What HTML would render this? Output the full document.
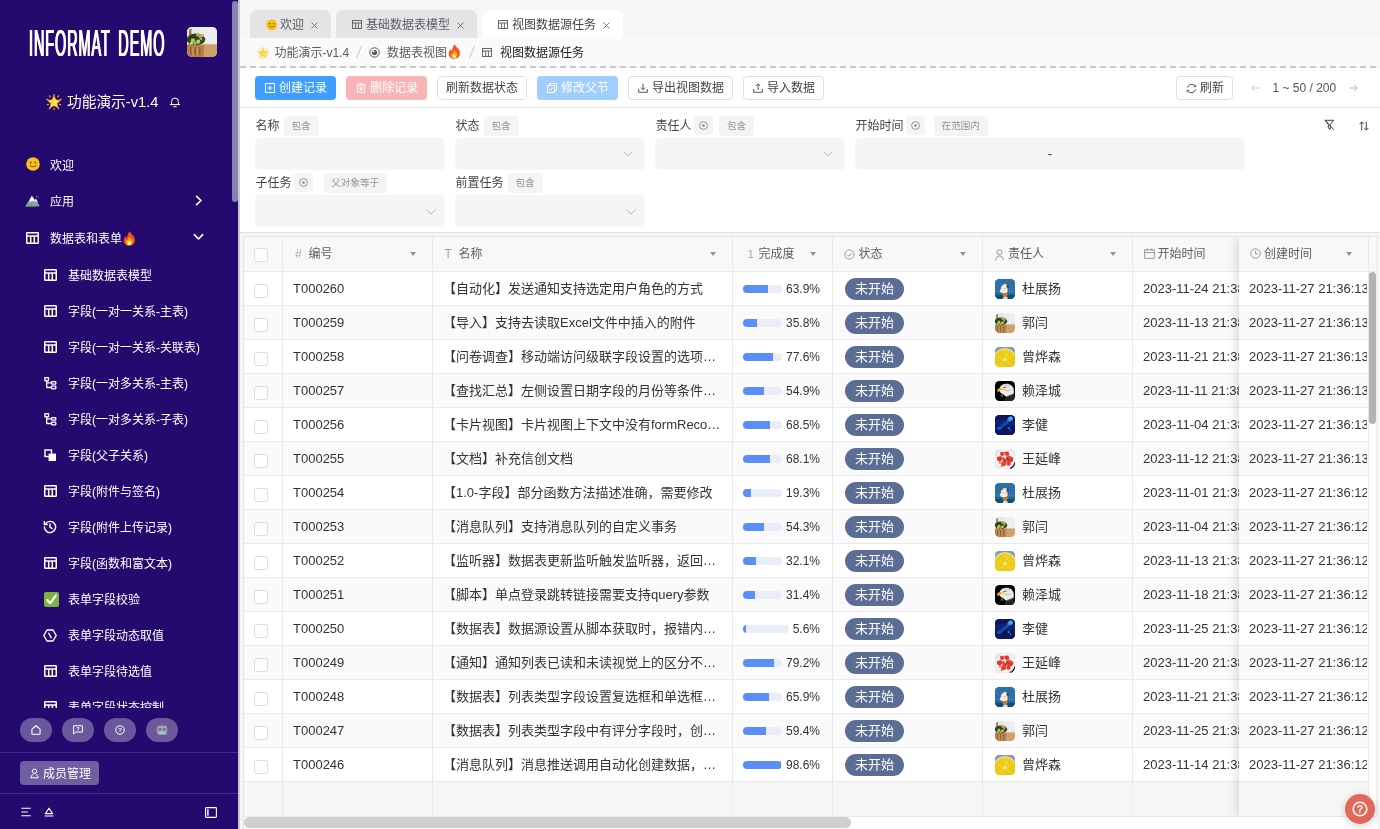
<!DOCTYPE html>
<html lang="zh-CN">
<head>
<meta charset="utf-8">
<title>视图数据源任务 - INFORMAT DEMO</title>
<style>
*{box-sizing:border-box;margin:0;padding:0}
html,body{width:1380px;height:829px;overflow:hidden;background:#fff}
body{font-family:"Liberation Sans","Noto Sans CJK SC",sans-serif;font-size:12px;color:#333;position:relative}
svg{display:block}
.abs{position:absolute}
#side{position:absolute;left:0;top:0;width:238px;height:829px;background:#240a6e;color:#fff;overflow:hidden}
#sidethumb{position:absolute;left:232px;top:.500px;width:6px;height:201.500px;background:#8982b1;border-radius:3px}
#resizer{position:absolute;left:238px;top:0;width:2px;height:829px;background:#c9c9c9}
#main{position:absolute;left:240px;top:0;width:1140px;height:829px;background:#f5f5f6;overflow:hidden}
.logo{position:absolute;left:28.500px;top:23.500px;font-size:36px;line-height:40px;color:#fff;white-space:nowrap;transform-origin:0 0;transform:scale(.40,1);text-shadow:1.300px 0 #fff,-1.300px 0 #fff;letter-spacing:2.400px;word-spacing:7px;font-family:"Liberation Sans",sans-serif}
.avatar0{position:absolute;left:187px;top:27px;width:30px;height:30px;border-radius:5px;overflow:hidden}
.apptitle{position:absolute;left:67px;top:92px;font-size:14.7px;line-height:20px;color:#fff;white-space:nowrap}
.mi{position:absolute;left:0;width:232px;height:36px;line-height:36px;font-size:12px;color:#fff;white-space:nowrap}
.mi .ic{position:absolute;top:10px;width:16px;height:16px}
.mi .tx{position:absolute;top:1px}
.pill{position:absolute;top:716px;width:32px;height:26px;border-radius:13px;background:rgba(255,255,255,.32)}
.sdiv{position:absolute;left:0;width:232px;height:1px;background:rgba(255,255,255,.14)}
/* main */
#tabs{position:absolute;left:0;top:0;width:1140px;height:38px;background:#f5f6f8}
.tab{position:absolute;top:10px;height:28px;border-radius:7px 7px 0 0;background:#e3e4e6;font-size:12px;line-height:28px;color:#5c5e62;white-space:nowrap}
.tab.on{background:#fff;color:#444}
.tab .t{position:absolute;top:1px}
#crumb{position:absolute;left:0;top:38px;width:1140px;height:28px;background:#fafafb;font-size:12px;line-height:28px;color:#5a5c60;white-space:nowrap}
#crumb span{position:absolute;top:1px}
#dash{position:absolute;left:0;top:66px;width:1140px;height:2px;background:repeating-linear-gradient(90deg,#c9c9c9 0,#c9c9c9 6px,transparent 6px,transparent 10px)}
#tool{position:absolute;left:0;top:68px;width:1140px;height:40px;background:#fff;border-bottom:1px solid #e3e3e3}
.btn{position:absolute;top:8px;height:24px;border-radius:4px;font-size:12px;line-height:24px;color:#fff;white-space:nowrap}
.btn.plain{background:#fff;border:1px solid #dcdfe6;color:#444;line-height:22px}
.btn span{position:absolute;top:0}
#filt{position:absolute;left:0;top:108px;width:1140px;height:125px;background:#fff;border-bottom:1px solid #e2e2e2}
.fl{position:absolute;font-size:12px;line-height:20px;color:#444;white-space:nowrap}
.ftag{position:absolute;height:20px;border-radius:4px;background:#f4f4f5;color:#909399;font-size:9.6px;line-height:20px;text-align:center;white-space:nowrap}
.fin{position:absolute;height:32px;border-radius:5px;background:#f5f5f5}
#gap{position:absolute;left:0;top:233px;width:1140px;height:4px;background:#f5f5f6}
/* table */
#tbl{position:absolute;left:3px;top:236px;width:1134px;height:593px;background:#fff;border-left:1px solid #e4e5e8;border-top:1px solid #e4e5e8;overflow:hidden}
.row{position:absolute;left:0;width:1136px;height:34px;border-bottom:1px solid #e8e9eb;background:#fff;font-size:13px;line-height:33px;color:#333;white-space:nowrap}
.row.alt{background:#fafafa}
.row.hd{height:35px;background:#f8f8f9;font-size:12px;color:#5c5e62;line-height:34px}
.c{position:absolute;top:0;height:100%;border-right:1px solid #e8e9eb;overflow:hidden}
.c .tx{position:absolute;left:10px;top:0;right:10px;overflow:hidden;text-overflow:ellipsis}
.cb{position:absolute;left:10px;width:14px;height:14px;border:1px solid #d9dce3;border-radius:2.500px;background:#fff}
.bar{position:absolute;left:10px;top:13px;width:39px;height:8px;border-radius:4px;background:#e9edf7;overflow:hidden}
.bar i{position:absolute;left:0;top:0;height:8px;background:#5b8ff7}
.pct{position:absolute;right:12px;top:1px;font-size:12px}
.st{position:absolute;left:12px;top:6px;width:59px;height:22px;border-radius:11px;background:#5b6d95;color:#fff;font-size:13px;line-height:21px;text-align:center}
.av{position:absolute;left:12px;top:7px;width:20px;height:20px;border-radius:4.500px;overflow:hidden}
.nm{position:absolute;left:39px;top:0}
.caret{position:absolute;top:15px;width:0;height:0;border-left:3.500px solid transparent;border-right:3.500px solid transparent;border-top:4px solid #909399}
#fix{position:absolute;left:995px;top:0;width:130px;height:579px;box-shadow:-3px 0 10px rgba(0,0,0,.12)}

#side,#main{will-change:transform}

</style>
</head>
<body>
<svg width="0" height="0" style="position:absolute"><defs><filter id="blr" x="-10%" y="-10%" width="120%" height="120%"><feGaussianBlur stdDeviation=".45"/></filter><symbol id="av0" viewBox="0 0 20 20"><rect width="20" height="20" fill="#2d6ea8"/><g filter="url(#blr)"><rect x="-2" y="-2" width="24" height="15" fill="#2e6fa9"/><rect x="-2" y="12.300" width="24" height="1.500" fill="#3f84b2"/><rect x="-2" y="13.600" width="24" height="3" fill="#1a6892"/><rect x="-2" y="16" width="24" height="6" fill="#104e76"/><path d="M7.300 14h5.500l-.7 3.800H8.200z" fill="#c8742f"/><ellipse cx="8.800" cy="11.800" rx="3.900" ry="2.500" fill="#f3e9dc"/><ellipse cx="9.300" cy="9" rx="3.300" ry="2.400" fill="#f7efe6"/><ellipse cx="10" cy="6.600" rx="2.400" ry="1.700" fill="#f4e6d6"/><path d="M7.500 9.500q2 1.300 4.500-.5" stroke="#d9b48a" stroke-width=".8" fill="none"/><path d="M11.800 5.600l1.800.3-.3 3.200-1.700-.4z" fill="#5b3420"/><ellipse cx="10.300" cy="19.600" rx="2.400" ry="2" fill="#e9dada"/></g></symbol><symbol id="av1" viewBox="0 0 20 20"><rect width="20" height="20" fill="#e7eae7"/><g filter="url(#blr)"><rect x="-2" y="-2" width="24" height="14" fill="#e6e9e6"/><rect x="9" y="-2" width="13" height="14" fill="#eceeed"/><rect x="-2" y="11.700" width="24" height="11" fill="#c9935d"/><rect x="11" y="11.700" width="11" height="11" fill="#d19f6b"/><path d="M1.300 12V2.500q.3-1.600 1.700-1.500V12z" fill="#a8743d"/><ellipse cx="6" cy="8.300" rx="6.200" ry="3.900" fill="#2c431c"/><circle cx="4" cy="9" r="1.500" fill="#a8c868"/><circle cx="7.500" cy="9.800" r="1.400" fill="#b3d072"/><circle cx="3" cy="10.800" r="1.100" fill="#b9d47c"/><circle cx="5.500" cy="10.900" r="1" fill="#a2c463"/><circle cx="8.600" cy="6" r="1.300" fill="#8fb255"/><circle cx="10.300" cy="5.600" r="1.100" fill="#a9c66e"/><circle cx="7" cy="5.300" r="1.100" fill="#d59a56"/><circle cx="9.300" cy="7.800" r="1" fill="#cf9560"/><circle cx="10.500" cy="9.200" r=".9" fill="#5b4a22"/><path d="M-.5 11.800h12l-.7 9h-11z" fill="#b8804a"/><path d="M2.500 13.500v5M5.500 13.500v5M8.500 13.500v5" stroke="#8c5f38" stroke-width="1"/><path d="M4 14v5M7 14v5" stroke="#cf9d68" stroke-width=".7"/></g></symbol><symbol id="av2" viewBox="0 0 20 20"><rect width="20" height="20" fill="#e9c915"/><g filter="url(#blr)"><rect x="-2" y="-2" width="24" height="9" fill="#7f93e0"/><circle cx="10" cy="13" r="11.800" fill="#f6efb0"/><circle cx="10" cy="13.300" r="11.200" fill="#f0d52a"/><circle cx="10" cy="13.500" r="10.300" fill="#ecca16"/><g stroke="#f3dc4a" stroke-width=".8"><path d="M10 4v8M3 9l6 4M17 9l-6 4M4 18l5-4M16 18l-5-4"/></g><circle cx="10" cy="12.700" r="1.500" fill="#f7edb2"/><path d="M12 8.500l.8-2" stroke="#f9f0b8" stroke-width=".8"/></g></symbol><symbol id="av3" viewBox="0 0 20 20"><rect width="20" height="20" fill="#030303"/><g filter="url(#blr)"><path d="M4.800 6.500C6.500 2.500 13 1.500 16.500 4.500c2.600 2.300 3 6.300 1.700 9l-4.500 2.200c-1.800.4-3.300-.2-4.300-1.400-.9-1.100-2.200-1.300-3.400-2.300-1.300-1.100-1.900-3.300-1.200-5.500z" fill="#efe9e1"/><path d="M9 4.500q3-1.500 6 .5M8 8q4 3 8 1" stroke="#cdbfae" stroke-width="1" fill="none"/><path d="M11 16l8-3.500V21H9z" fill="#262626"/><path d="M12 15.500l6-2" stroke="#555" stroke-width=".8"/><path d="M2 9.500c.3-1.700 2-2.800 4.500-2.600l1.600 1.600c-1.800.5-3.300.8-4.200 2.600-.9-.3-1.600-.8-1.900-1.600z" fill="#f0b41c"/><path d="M8 6.800l3.500-.5" stroke="#6b5b48" stroke-width=".9"/><path d="M5.500 15.500l1.500-2 .8 2.300" stroke="#5f7da6" stroke-width="1" fill="none"/></g></symbol><symbol id="av4" viewBox="0 0 20 20"><rect width="20" height="20" fill="#07195c"/><g filter="url(#blr)"><rect x="-2" y="-2" width="24" height="24" fill="#07195c"/><rect x="-2" y="5" width="24" height="6" fill="#0a2473"/><path d="M15.500 5.500L4 15.500l-2-2.500L13 4z" fill="#12409f"/><path d="M13.500 6.500L5 14" stroke="#1e58c8" stroke-width="1.500"/><g stroke="#06184f" stroke-width=".6"><path d="M7 8l5 5M9 6.500l4.500 4.500M5.500 10l4 4"/></g><ellipse cx="15.300" cy="3.800" rx="2.900" ry="2.300" fill="#2f92f5" transform="rotate(-35 15.300 3.800)"/><circle cx="15.800" cy="3.300" r="1.200" fill="#55b2ff"/><circle cx="13.800" cy="13" r="1.200" fill="#1f6be0"/><circle cx="15.500" cy="15.300" r=".8" fill="#2a7cf0"/><ellipse cx="4" cy="13.500" rx="2.500" ry="1.300" fill="#1a50c0"/></g></symbol><symbol id="av5" viewBox="0 0 20 20"><rect width="20" height="20" fill="#eeeef1"/><g filter="url(#blr)"><rect x="-2" y="-2" width="24" height="24" fill="#eaeaee"/><circle cx="10" cy="10" r="9.500" fill="#f6f6f8"/><path d="M15 19.500q4-1.500 5-6" stroke="#222" stroke-width="1.300" fill="none"/><path d="M1 7q.5-3 3-5.500" stroke="#c5cad6" stroke-width=".8" fill="none"/><circle cx="5" cy="13.500" r="1.600" fill="#cf9f78"/><circle cx="13.500" cy="16" r="1.300" fill="#d4a57e"/><circle cx="9" cy="16.300" r="1" fill="#d8ab88"/><g fill="#e3382c"><path d="M5.500 2.800l3 .2 1 3-2.800 1.300-2-2z"/><path d="M9 2.700l4.500-.2.800 3.500-3.800 1.200z"/><path d="M2 8l4-1 2 3-3 2.800-3-1.500z"/><path d="M7.500 8l3 .500.800 4-3.500 1z"/><path d="M11 7.500l4-.5 3.500 2-1 4-4 .5-2.500-2z"/><path d="M7 12.500l4-.3.500 3.500-3 1.500-2.500-2z"/><path d="M11.500 13l3.500-.5 1 3-3.500 1.200z"/><circle cx="13.300" cy="5.800" r="1"/><circle cx="6.800" cy="17" r=".9"/></g><path d="M9.300 6.300l1.800.2-.2 3.500-1.400-.3z" fill="#f5e9e6"/><path d="M12.300 9.300l1.200 1.700M10 12l1.500.8" stroke="#7a2d22" stroke-width=".9"/><path d="M5 4.500l1.500 1M14 8.500l1.500 1M8.500 13.500l1.500.6" stroke="#f28a7c" stroke-width=".7"/></g></symbol></defs></svg>
<div id="side">
<div class="logo">INFORMAT DEMO</div>
<div class="avatar0"><svg width="30" height="30" viewBox="0 0 20 20"><use href="#av1"/></svg></div>
<svg class="abs" style="left:46px;top:94px" width="16" height="16" viewBox="0 0 16 16"><g stroke="#fbc02d" stroke-width="1.100" stroke-linecap="round"><path d="M8 .5v1.500M.600 5.300l1.500.5M15.400 5.300l-1.500.5M3.300 14.800l.8-1.200M12.700 14.800l-.8-1.200M1.300 10.800l1.200-.5M14.700 10.800l-1.200-.5M3.400 1.900l.8 1.100M12.600 1.900l-.8 1.100M8 15.600v-1"/></g><path d="M8 1.700l2 4.100 4.600.6-3.400 3.100.9 4.500L8 11.800l-4.100 2.200.9-4.500L1.400 6.400 6 5.800z" fill="#fdd835" stroke="#f9a825" stroke-width=".4" stroke-linejoin="round"/><path d="M8 3.600l1.300 2.900 3 .4-2.200 2 .6 3L8 10.400z" fill="#ffee58" opacity=".7"/></svg>
<div class="apptitle">功能演示-v1.4</div>
<svg class="abs" style="left:169px;top:96px" width="12" height="12" viewBox="0 0 12 12" fill="none" stroke="#fff" stroke-width="1" stroke-linecap="round" stroke-linejoin="round"><path d="M2.600 8.500V5.400a3.400 3.400 0 0 1 6.800 0v3.100M1.300 8.600h9.400M4.700 10.700h2.600"/></svg>
<div id="menu" style="position:absolute;left:0;top:0;width:232px;height:708px;overflow:hidden">
<div class="mi" style="top:146px"><svg class="abs" style="left:26px;top:11px" width="14" height="14" viewBox="0 0 14 14"><circle cx="7" cy="7" r="6.8" fill="#fcc21b"/><ellipse cx="4.7" cy="5.6" rx=".8" ry="1.1" fill="#5d4037"/><ellipse cx="9.3" cy="5.6" rx=".8" ry="1.1" fill="#5d4037"/><path d="M4 8.9q3 2.3 6 0" fill="none" stroke="#5d4037" stroke-width=".9" stroke-linecap="round"/></svg><span class="tx" style="left:50px;top:2px">欢迎</span></div>
<div class="mi" style="top:182px"><svg class="abs" style="left:25px;top:13px" width="15" height="12" viewBox="0 0 15 12"><path d="M.3 11.300L6.800.8l3 4.300 1.200-1.300 3.700 7.500z" fill="#8d9db0"/><path d="M6.800.8l3 4.300-1.300 1.700-1.500-1.300-1.500 1.800-1.200-1.100z" fill="#fff"/><path d="M11 3.800l1.600 3.200-1.200-.5-.9.900-.9-1.700z" fill="#e8eef5"/><path d="M0 11.700q3.500-2.300 7.500-1.100t7.500 1.100z" fill="#6a9a3b"/><circle cx="11.600" cy="1.400" r=".5" fill="#fff"/><circle cx="13.200" cy="2.600" r=".4" fill="#fff"/></svg><span class="tx" style="left:50px;top:2px">应用</span><svg class="abs" style="left:195px;top:13px" width="8" height="11" viewBox="0 0 8 11" fill="none" stroke="#fff" stroke-width="1.6" stroke-linecap="round" stroke-linejoin="round"><path d="M1.600 1.300l4.400 4.200-4.400 4.200"/></svg></div>
<div class="mi" style="top:220px"><svg class="abs" style="left:26px;top:12px" width="13" height="12" viewBox="0 0 13 12" fill="none" stroke="#fff" stroke-width="1.5"><rect x=".75" y=".75" width="11.5" height="10.5" rx=".6"/><path d="M.75 3.9h11.5M4.7 3.9v7.3M8.3 3.9v7.3"/></svg><span class="tx" style="left:50px">数据表和表单</span><svg class="abs" style="left:123px;top:11px" width="13" height="15" viewBox="0 0 13 15"><path d="M6.800.3c.7 2.400 3.100 3.400 4.300 5.800 1.500 2.900.9 6.400-1.900 8-1.900 1.100-4.400 1-6.200-.2C.6 12.300.200 9.200 1.400 7c.4-.8.900-1.500 1.500-2.100.1 1 .5 1.700 1.100 2.100C4 4.600 5.200 2.100 6.800.3z" fill="#f4511e"/><path d="M6.600 5.800c.5 1.500 2 2.300 2.600 3.900.6 1.700 0 3.500-1.500 4.200-1.100.5-2.500.4-3.500-.4-1.200-1-1.400-2.700-.7-4 .2-.4.500-.8.900-1.100 0 .6.300 1 .7 1.300 0-1.500.6-2.900 1.500-3.900z" fill="#ffb300"/><path d="M6.500 9.600c.3.900 1.100 1.400 1.400 2.300.3.900-.1 1.800-.9 2.100-.6.200-1.300.1-1.800-.3-.6-.5-.7-1.400-.3-2.100.4-.7 1.200-1.100 1.600-2z" fill="#fff59d"/></svg><svg class="abs" style="left:193px;top:13px" width="11" height="8" viewBox="0 0 11 8" fill="none" stroke="#fff" stroke-width="1.600" stroke-linecap="round" stroke-linejoin="round"><path d="M1.300 1.600l4.200 4.400 4.200-4.400"/></svg></div>
<div class="mi" style="top:257px"><svg class="abs" style="left:44px;top:12px" width="13" height="12" viewBox="0 0 13 12" fill="none" stroke="#fff" stroke-width="1.5"><rect x=".75" y=".75" width="11.5" height="10.5" rx=".6"/><path d="M.75 3.9h11.5M4.7 3.9v7.3M8.3 3.9v7.3"/></svg><span class="tx" style="left:68px">基础数据表模型</span></div>
<div class="mi" style="top:293px"><svg class="abs" style="left:44px;top:12px" width="13" height="12" viewBox="0 0 13 12" fill="none" stroke="#fff" stroke-width="1.5"><rect x=".75" y=".75" width="11.5" height="10.5" rx=".6"/><path d="M.75 3.9h11.5M4.7 3.9v7.3M8.3 3.9v7.3"/></svg><span class="tx" style="left:68px">字段(一对一关系-主表)</span></div>
<div class="mi" style="top:329px"><svg class="abs" style="left:44px;top:12px" width="13" height="12" viewBox="0 0 13 12" fill="none" stroke="#fff" stroke-width="1.5"><rect x=".75" y=".75" width="11.5" height="10.5" rx=".6"/><path d="M.75 3.9h11.5M4.7 3.9v7.3M8.3 3.9v7.3"/></svg><span class="tx" style="left:68px">字段(一对一关系-关联表)</span></div>
<div class="mi" style="top:365px"><svg class="abs" style="left:44px;top:12px" width="13" height="13" viewBox="0 0 13 13" fill="none" stroke="#fff" stroke-width="1.3"><rect x=".9" y=".7" width="3.6" height="3"/><rect x="7.6" y="4.6" width="4.2" height="2.6" rx=".5"/><rect x="7.6" y="9.2" width="4.2" height="2.6" rx=".5"/><path d="M2.7 3.7v6.2q0 .6.6.6h4.3M2.7 5.9h4.9"/></svg><span class="tx" style="left:68px">字段(一对多关系-主表)</span></div>
<div class="mi" style="top:401px"><svg class="abs" style="left:44px;top:12px" width="13" height="13" viewBox="0 0 13 13" fill="none" stroke="#fff" stroke-width="1.3"><rect x=".9" y=".7" width="3.6" height="3"/><rect x="7.6" y="4.6" width="4.2" height="2.6" rx=".5"/><rect x="7.6" y="9.2" width="4.2" height="2.6" rx=".5"/><path d="M2.7 3.7v6.2q0 .6.6.6h4.3M2.7 5.9h4.9"/></svg><span class="tx" style="left:68px">字段(一对多关系-子表)</span></div>
<div class="mi" style="top:437px"><svg class="abs" style="left:44px;top:12px" width="13" height="13" viewBox="0 0 13 13"><rect x="1" y="1" width="6.5" height="6.5" fill="none" stroke="#fff" stroke-width="1.4"/><rect x="4.6" y="4.6" width="7.4" height="7.4" fill="#fff"/></svg><span class="tx" style="left:68px">字段(父子关系)</span></div>
<div class="mi" style="top:473px"><svg class="abs" style="left:44px;top:12px" width="13" height="12" viewBox="0 0 13 12" fill="none" stroke="#fff" stroke-width="1.5"><rect x=".75" y=".75" width="11.5" height="10.5" rx=".6"/><path d="M.75 3.9h11.5M4.7 3.9v7.3M8.3 3.9v7.3"/></svg><span class="tx" style="left:68px">字段(附件与签名)</span></div>
<div class="mi" style="top:509px"><svg class="abs" style="left:43px;top:11px" width="14" height="14" viewBox="0 0 14 14" fill="none" stroke="#fff" stroke-width="1.4" stroke-linecap="round" stroke-linejoin="round"><path d="M2.2 4.1A5.6 5.6 0 1 1 1.4 7"/><path d="M1.3 1.6v2.9h2.9"/><path d="M7 3.9v3.3l2.2 1.5"/></svg><span class="tx" style="left:68px">字段(附件上传记录)</span></div>
<div class="mi" style="top:545px"><svg class="abs" style="left:44px;top:12px" width="13" height="12" viewBox="0 0 13 12" fill="none" stroke="#fff" stroke-width="1.5"><rect x=".75" y=".75" width="11.5" height="10.5" rx=".6"/><path d="M.75 3.9h11.5M4.7 3.9v7.3M8.3 3.9v7.3"/></svg><span class="tx" style="left:68px">字段(函数和富文本)</span></div>
<div class="mi" style="top:581px"><svg class="abs" style="left:44px;top:11px" width="15" height="15" viewBox="0 0 15 15"><rect width="15" height="15" rx="2" fill="#7cb342"/><path d="M3.2 8.1l3 3 5.6-7.4" fill="none" stroke="#fff" stroke-width="2.2" stroke-linecap="round" stroke-linejoin="round"/></svg><span class="tx" style="left:68px">表单字段校验</span></div>
<div class="mi" style="top:617px"><svg class="abs" style="left:43px;top:12px" width="14" height="13" viewBox="0 0 14 13" fill="none" stroke="#fff" stroke-width="1.4" stroke-linejoin="round" stroke-linecap="round"><path d="M4 1h6l3.2 5.5L10 12H4L.8 6.5z"/><path d="M5.8 4.2l2.4 4.6"/></svg><span class="tx" style="left:68px">表单字段动态取值</span></div>
<div class="mi" style="top:653px"><svg class="abs" style="left:44px;top:12px" width="13" height="12" viewBox="0 0 13 12" fill="none" stroke="#fff" stroke-width="1.5"><rect x=".75" y=".75" width="11.5" height="10.5" rx=".6"/><path d="M.75 3.9h11.5M4.7 3.9v7.3M8.3 3.9v7.3"/></svg><span class="tx" style="left:68px">表单字段待选值</span></div>
<div class="mi" style="top:689px"><svg class="abs" style="left:44px;top:12px" width="13" height="12" viewBox="0 0 13 12" fill="none" stroke="#fff" stroke-width="1.5"><rect x=".75" y=".75" width="11.5" height="10.5" rx=".6"/><path d="M.75 3.9h11.5M4.7 3.9v7.3M8.3 3.9v7.3"/></svg><span class="tx" style="left:68px">表单字段状态控制</span></div>
</div>
<div class="pill" style="left:20px;top:718px;height:24px"><svg class="abs" style="left:11px;top:7px" width="10" height="10" viewBox="0 0 11 11" fill="none" stroke="#fff" stroke-width="1.200" stroke-linejoin="round"><path d="M1 4.600L5.500.8 10 4.600V9.300q0 .9-.9.900H1.900q-.9 0-.9-.9z"/></svg></div>
<div class="pill" style="left:62px;top:718px;height:24px"><svg class="abs" style="left:11px;top:7px" width="10" height="10" viewBox="0 0 11 11" fill="none" stroke="#fff" stroke-width="1.100" stroke-linejoin="round"><path d="M.7.800h9.600v7H3L.7 9.900z"/><text x="5.500" y="6.400" font-size="5.500" font-family="'Liberation Sans',sans-serif" font-weight="bold" fill="#fff" stroke="none" text-anchor="middle">?</text></svg></div>
<div class="pill" style="left:104px;top:718px;height:24px"><svg class="abs" style="left:11px;top:7px" width="10" height="10" viewBox="0 0 11 11" fill="none" stroke="#fff" stroke-width="1.100"><circle cx="5.500" cy="5.500" r="4.700"/><text x="5.500" y="7.800" font-size="6.500" font-family="'Liberation Sans',sans-serif" font-weight="bold" fill="#fff" stroke="none" text-anchor="middle">?</text></svg></div>
<div class="pill" style="left:146px;top:718px;height:24px"><svg class="abs" style="left:9px;top:5px" width="14" height="14" viewBox="0 0 14 14"><path d="M7 .6v2" stroke="#b0685f" stroke-width="1"/><circle cx="7" cy=".9" r=".8" fill="#c0605a"/><rect x="2.200" y="2.800" width="9.600" height="9" rx="1.300" fill="#9aa9b5"/><rect x=".6" y="5.300" width="1.600" height="3.800" rx=".6" fill="#b8606a"/><rect x="11.800" y="5.300" width="1.600" height="3.800" rx=".6" fill="#b8606a"/><circle cx="4.900" cy="6.300" r="1.300" fill="#5c6f85"/><circle cx="9.100" cy="6.300" r="1.300" fill="#5c6f85"/><rect x="4.400" y="9.200" width="5.200" height="1.300" fill="#c5d0d8"/></svg></div>
<div class="sdiv" style="top:752px;width:238px"></div>
<div class="abs" style="left:20px;top:761px;width:79px;height:24px;border-radius:4px;background:rgba(255,255,255,.35);color:#fff;font-size:12px;line-height:24px;white-space:nowrap"><svg class="abs" style="left:9.500px;top:6.500px" width="9" height="11" viewBox="0 0 10 12" fill="none" stroke="#fff" stroke-width="1.100" stroke-linejoin="round"><circle cx="5" cy="3.500" r="2.400"/><path d="M1 10.800c.3-2.600 1.700-3.600 2.600-3.900M9 10.800c-.3-2.600-1.700-3.600-2.600-3.900M.8 10.800h8.400"/></svg><span class="abs" style="left:23px;top:1px">成员管理</span></div>
<div class="sdiv" style="top:793px;width:238px"></div>
<svg class="abs" style="left:21px;top:807px" width="10" height="10" viewBox="0 0 10 10" fill="none" stroke="#fff" stroke-width="1.100"><path d="M.3 1.300h9.400M.3 5h6.500M.3 8.700h9.400"/></svg>
<svg class="abs" style="left:44px;top:807px" width="10" height="10" viewBox="0 0 10 10" fill="none" stroke="#fff" stroke-width="1.100" stroke-linejoin="round"><path d="M5 1.200L8.600 6.600H1.400zM.6 9h8.800"/></svg>
<svg class="abs" style="left:205px;top:807px" width="12" height="11" viewBox="0 0 12 11" fill="none" stroke="#fff" stroke-width="1.100"><rect x=".6" y=".6" width="10.800" height="9.800" rx=".6"/><path d="M2.900 2.200v6.600" stroke-width="1.400"/></svg>
<div id="sidethumb"></div>
</div><div id="resizer"></div>
<div id="main">
<div id="tabs">
<div class="tab" style="left:10px;width:81px"><svg class="abs" style="left:15.5px;top:8.5px" width="11.5" height="11.5" viewBox="0 0 14 14"><circle cx="7" cy="7" r="6.8" fill="#fcc21b"/><ellipse cx="4.7" cy="5.6" rx=".8" ry="1.1" fill="#5d4037"/><ellipse cx="9.3" cy="5.6" rx=".8" ry="1.1" fill="#5d4037"/><path d="M4 8.9q3 2.3 6 0" fill="none" stroke="#5d4037" stroke-width=".9" stroke-linecap="round"/></svg><span class="t" style="left:30px">欢迎</span><svg class="abs" style="left:61px;top:12px" width="7" height="7" viewBox="0 0 7 7" fill="none" stroke="#777" stroke-width="1"><path d="M.5.500l6 6M6.500.500l-6 6"/></svg></div>
<div class="tab" style="left:96px;width:141px"><svg class="abs" style="left:16px;top:10px" width="10" height="9" viewBox="0 0 10 9" fill="none" stroke="#666" stroke-width="1"><rect x=".5" y=".5" width="9" height="8"/><path d="M.5 3h9M3.600 3v5.500M6.400 3v5.500"/></svg><span class="t" style="left:30px">基础数据表模型</span><svg class="abs" style="left:121px;top:12px" width="7" height="7" viewBox="0 0 7 7" fill="none" stroke="#777" stroke-width="1"><path d="M.5.500l6 6M6.500.500l-6 6"/></svg></div>
<div class="tab on" style="left:242px;width:141px"><svg class="abs" style="left:16px;top:10px" width="10" height="9" viewBox="0 0 10 9" fill="none" stroke="#666" stroke-width="1"><rect x=".5" y=".5" width="9" height="8"/><path d="M.5 3h9M3.600 3v5.500M6.400 3v5.500"/></svg><span class="t" style="left:30px">视图数据源任务</span><svg class="abs" style="left:121px;top:12px" width="7" height="7" viewBox="0 0 7 7" fill="none" stroke="#777" stroke-width="1"><path d="M.5.500l6 6M6.500.500l-6 6"/></svg></div>
</div>
<div id="crumb">
<svg class="abs" style="left:17px;top:9px" width="12" height="12" viewBox="0 0 16 16"><g stroke="#fbc02d" stroke-width="1.100" stroke-linecap="round"><path d="M8 .5v1.500M.600 5.300l1.500.5M15.400 5.300l-1.500.5M3.300 14.800l.8-1.200M12.700 14.800l-.8-1.200M1.300 10.800l1.200-.5M14.700 10.800l-1.200-.5M3.400 1.900l.8 1.100M12.600 1.900l-.8 1.100M8 15.600v-1"/></g><path d="M8 1.700l2 4.100 4.600.6-3.400 3.100.9 4.500L8 11.800l-4.100 2.200.9-4.500L1.400 6.400 6 5.800z" fill="#fdd835" stroke="#f9a825" stroke-width=".4" stroke-linejoin="round"/><path d="M8 3.600l1.300 2.900 3 .4-2.200 2 .6 3L8 10.400z" fill="#ffee58" opacity=".7"/></svg>
<span style="left:34.500px">功能演示-v1.4</span>
<svg class="abs" style="left:115px;top:7px" width="8" height="14" viewBox="0 0 8 14"><path d="M6.500 1L1.500 13" stroke="#c0c4cc" stroke-width="1"/></svg>
<svg class="abs" style="left:129px;top:9px" width="11" height="11" viewBox="0 0 11 11"><circle cx="5.500" cy="5.500" r="4.700" fill="none" stroke="#555" stroke-width="1"/><circle cx="5.500" cy="5.500" r="2.600" fill="#555"/><circle cx="4.600" cy="4.600" r=".9" fill="#fff"/></svg>
<span style="left:147px">数据表视图</span>
<svg class="abs" style="left:208px;top:6px" width="13" height="15" viewBox="0 0 13 15"><path d="M6.800.3c.7 2.400 3.100 3.400 4.300 5.800 1.500 2.900.9 6.400-1.900 8-1.900 1.100-4.400 1-6.200-.2C.6 12.300.200 9.200 1.400 7c.4-.8.900-1.500 1.500-2.100.1 1 .5 1.700 1.100 2.100C4 4.600 5.200 2.100 6.800.3z" fill="#f4511e"/><path d="M6.600 5.800c.5 1.500 2 2.300 2.600 3.900.6 1.700 0 3.500-1.500 4.200-1.100.5-2.500.4-3.500-.4-1.200-1-1.400-2.700-.7-4 .2-.4.500-.8.900-1.100 0 .6.300 1 .7 1.300 0-1.500.6-2.900 1.500-3.900z" fill="#ffb300"/><path d="M6.500 9.600c.3.900 1.100 1.400 1.400 2.300.3.900-.1 1.800-.9 2.100-.6.200-1.300.1-1.800-.3-.6-.5-.7-1.400-.3-2.100.4-.7 1.200-1.100 1.600-2z" fill="#fff59d"/></svg>
<svg class="abs" style="left:228px;top:7px" width="8" height="14" viewBox="0 0 8 14"><path d="M6.500 1L1.500 13" stroke="#c0c4cc" stroke-width="1"/></svg>
<svg class="abs" style="left:242px;top:10px" width="10" height="9" viewBox="0 0 10 9" fill="none" stroke="#666" stroke-width="1"><rect x=".5" y=".5" width="9" height="8"/><path d="M.5 3h9M3.600 3v5.500M6.400 3v5.500"/></svg>
<span style="left:260px;color:#222">视图数据源任务</span>
</div><div id="dash"></div>
<div id="tool">
<div class="btn" style="left:15px;width:81px;background:#409eff"><svg class="abs" style="left:10px;top:7px" width="10" height="10" viewBox="0 0 10 10" fill="none" stroke="#fff" stroke-width="1"><rect x=".5" y=".5" width="9" height="9"/><path d="M5 2.500v5M2.500 5h5"/></svg><span style="left:24px">创建记录</span></div>
<div class="btn" style="left:106px;width:81px;background:#f9b5b5"><svg class="abs" style="left:10px;top:7px" width="10" height="10" viewBox="0 0 10 10" fill="none" stroke="#fff" stroke-width="1"><path d="M.5 2h9M3.500 2V.600h3V2M1.500 2v7.400h7V2"/><rect x="3.600" y="4" width="2.800" height="3.400" fill="#fff" stroke="none"/></svg><span style="left:24px">删除记录</span></div>
<div class="btn plain" style="left:197px;width:90px"><span style="left:8px">刷新数据状态</span></div>
<div class="btn" style="left:297px;width:81px;background:#a0cfff"><svg class="abs" style="left:10px;top:7px" width="10" height="10" viewBox="0 0 10 10" fill="none" stroke="#fff" stroke-width="1"><path d="M2.500 2.500V.500h7v7h-2"/><rect x=".5" y="2.500" width="7" height="7"/><path d="M2.300 6l1.300 1.400 2.200-2.700"/></svg><span style="left:24px">修改父节</span></div>
<div class="btn plain" style="left:388px;width:105px"><svg class="abs" style="left:8.500px;top:5.500px" width="10" height="10" viewBox="0 0 10 10" fill="none" stroke="#555" stroke-width="1"><path d="M.7 6v3.300h8.600V6M5 .500v6M2.800 4.500L5 6.700l2.200-2.200"/></svg><span style="left:23px">导出视图数据</span></div>
<div class="btn plain" style="left:503px;width:81px"><svg class="abs" style="left:8.500px;top:5.500px" width="10" height="10" viewBox="0 0 10 10" fill="none" stroke="#555" stroke-width="1"><path d="M.7 6v3.300h8.600V6M5 7V.800M2.800 3L5 .800 7.200 3"/></svg><span style="left:23px">导入数据</span></div>
<div class="btn plain" style="left:936px;width:57px"><svg class="abs" style="left:9px;top:6px" width="11" height="11" viewBox="0 0 11 11" fill="none" stroke="#555" stroke-width="1"><path d="M9.300 3.300A4.300 4.300 0 0 0 1.400 4.600M1.500 7.500A4.300 4.300 0 0 0 9.500 6.400"/><path d="M9.700 1.500v2.200H7.600M1.100 9.300V7.200h2.100" stroke-width=".9"/></svg><span style="left:23px">刷新</span></div>
<svg class="abs" style="left:1011px;top:16px" width="9" height="8" viewBox="0 0 9 8" fill="none" stroke="#c0c4cc" stroke-width="1"><path d="M8.500 4H1M3.800 1L.8 4l3 3"/></svg>
<div class="abs" style="left:1032.500px;top:9px;font-size:12px;line-height:22px;color:#555;white-space:nowrap">1 ~ 50 / 200</div>
<svg class="abs" style="left:1108.500px;top:16px" width="9" height="8" viewBox="0 0 9 8" fill="none" stroke="#b0b3ba" stroke-width="1"><path d="M.5 4H8M5.200 1l3 3-3 3"/></svg>
</div>
<div id="filt">
<div class="fl" style="left:15.500px;top:8px">名称</div><div class="ftag" style="left:43.500px;top:7.500px;width:35px">包含</div><div class="fin" style="left:15px;top:30px;width:190px"></div>
<div class="fl" style="left:215.500px;top:8px">状态</div><div class="ftag" style="left:243.500px;top:7.500px;width:35px">包含</div><div class="fin" style="left:215px;top:30px;width:190px"><svg class="abs" style="left:168px;top:13px" width="10" height="6" viewBox="0 0 10 6" fill="none" stroke="#b4b7bd" stroke-width="1"><path d="M.500.600l4.500 4.400 4.500-4.400"/></svg></div>
<div class="fl" style="left:415.500px;top:8px">责任人</div><div class="ftag" style="left:454px;top:7.5px;width:19px;height:19.500px"><svg class="abs" style="left:5px;top:5.5px" width="9" height="9" viewBox="0 0 9 9"><circle cx="4.500" cy="4.500" r="3.900" fill="none" stroke="#888" stroke-width=".9"/><circle cx="4.500" cy="4.500" r="1.300" fill="#888"/></svg></div><div class="ftag" style="left:479px;top:7.500px;width:35px">包含</div><div class="fin" style="left:415px;top:30px;width:190px"><svg class="abs" style="left:168px;top:13px" width="10" height="6" viewBox="0 0 10 6" fill="none" stroke="#b4b7bd" stroke-width="1"><path d="M.500.600l4.500 4.400 4.500-4.400"/></svg></div>
<div class="fl" style="left:615.500px;top:8px">开始时间</div><div class="ftag" style="left:665.5px;top:7.5px;width:19px;height:19.500px"><svg class="abs" style="left:5px;top:5.5px" width="9" height="9" viewBox="0 0 9 9"><circle cx="4.500" cy="4.500" r="3.900" fill="none" stroke="#888" stroke-width=".9"/><circle cx="4.500" cy="4.500" r="1.300" fill="#888"/></svg></div><div class="ftag" style="left:693.500px;top:7.500px;width:54.500px">在范围内</div><div class="fin" style="left:615px;top:30px;width:390px;text-align:center;line-height:32px;font-size:13px;color:#333">-</div>
<div class="fl" style="left:15.500px;top:65px">子任务</div><div class="ftag" style="left:53.5px;top:64.8px;width:19px;height:19.500px"><svg class="abs" style="left:5px;top:5.5px" width="9" height="9" viewBox="0 0 9 9"><circle cx="4.500" cy="4.500" r="3.900" fill="none" stroke="#888" stroke-width=".9"/><circle cx="4.500" cy="4.500" r="1.300" fill="#888"/></svg></div><div class="ftag" style="left:83.500px;top:64.800px;width:63.500px">父对象等于</div><div class="fin" style="left:15px;top:87.300px;width:190px;height:31.500px"><svg class="abs" style="left:171px;top:14px" width="10" height="6" viewBox="0 0 10 6" fill="none" stroke="#b4b7bd" stroke-width="1"><path d="M.500.600l4.500 4.400 4.500-4.400"/></svg></div>
<div class="fl" style="left:215.500px;top:65px">前置任务</div><div class="ftag" style="left:267.500px;top:64.800px;width:35px">包含</div><div class="fin" style="left:215px;top:87.300px;width:190px;height:31.500px"><svg class="abs" style="left:171px;top:14px" width="10" height="6" viewBox="0 0 10 6" fill="none" stroke="#b4b7bd" stroke-width="1"><path d="M.500.600l4.500 4.400 4.500-4.400"/></svg></div>
<svg class="abs" style="left:1084px;top:11px" width="11" height="12" viewBox="0 0 11 12" fill="none" stroke="#444" stroke-width="1" stroke-linejoin="round"><path d="M1.200 1.300h8.300L6.300 5.500v4.800l-2-1.200V5.500z"/><path d="M.8.800l9 10"/></svg>
<svg class="abs" style="left:1118.500px;top:12.500px" width="10" height="10" viewBox="0 0 10 10" fill="none" stroke="#444" stroke-width="1" stroke-linejoin="round"><path d="M2.700 9.300V.900M.600 3L2.700.900 4.800 3M7.300.700v8.400M5.200 7L7.300 9.100 9.400 7"/></svg>
</div><div id="gap"></div>
<div id="tbl">
<div class="row hd" style="top:0">
<div class="c" style="left:0;width:39px"><div class="cb" style="top:11px"></div></div>
<div class="c" style="left:39px;width:150px"><span class="abs" style="left:12px;top:0;color:#a3a6ad;font-size:12px">#</span><span class="abs" style="left:25.5px;top:0">编号</span><div class="caret" style="left:126.5px"></div></div>
<div class="c" style="left:189px;width:300px"><span class="abs" style="left:11.500px;top:0;color:#a3a6ad;font-size:12px">T</span><span class="abs" style="left:25.5px;top:0">名称</span><div class="caret" style="left:276.5px"></div></div>
<div class="c" style="left:489px;width:100px"><span class="abs" style="left:14.500px;top:0;color:#a3a6ad;font-size:11.500px">1</span><span class="abs" style="left:25.5px;top:0">完成度</span><div class="caret" style="left:76.5px"></div></div>
<div class="c" style="left:589px;width:150px"><svg class="abs" style="left:11px;top:11.500px" width="11" height="11" viewBox="0 0 11 11" fill="none" stroke="#8d9096" stroke-width=".9"><circle cx="5.500" cy="5.500" r="4.600"/><path d="M3.300 5.600l1.600 1.600 2.900-3.200"/></svg><span class="abs" style="left:25.5px;top:0">状态</span><div class="caret" style="left:126.5px"></div></div>
<div class="c" style="left:739px;width:150px"><svg class="abs" style="left:12px;top:11.500px" width="9" height="12" viewBox="0 0 9 12" fill="none" stroke="#8d9096" stroke-width=".9"><circle cx="4.500" cy="3.300" r="2.500"/><path d="M.600 11.300c.3-3 1.800-4.300 3.900-4.300s3.600 1.300 3.900 4.300"/></svg><span class="abs" style="left:25px;top:0">责任人</span><div class="caret" style="left:126.5px"></div></div>
<div class="c" style="left:889px;width:150px"><svg class="abs" style="left:10.500px;top:11px" width="11" height="11" viewBox="0 0 11 11" fill="none" stroke="#8d9096" stroke-width=".9"><rect x=".7" y="1.800" width="9.600" height="8.500"/><path d="M.7 4.600h9.600M3.200.400v2.400M7.800.400v2.400"/></svg><span class="abs" style="left:24.5px;top:0">开始时间</span></div>
</div>
<div class="row" style="top:35px">
<div class="c" style="left:0;width:39px"><div class="cb" style="top:11.500px"></div></div>
<div class="c" style="left:39px;width:150px"><div class="tx">T000260</div></div>
<div class="c" style="left:189px;width:300px"><div class="tx" style="left:10px;right:10px">【自动化】发送通知支持选定用户角色的方式</div></div>
<div class="c" style="left:489px;width:100px"><div class="bar" style="width:39px"><i style="width:63.9%"></i></div><span class="pct">63.9%</span></div>
<div class="c" style="left:589px;width:150px"><div class="st">未开始</div></div>
<div class="c" style="left:739px;width:150px"><div class="av"><svg width="20" height="20" viewBox="0 0 20 20"><use href="#av0"/></svg></div><span class="nm">杜展扬</span></div>
<div class="c" style="left:889px;width:150px"><div class="tx" style="text-overflow:clip">2023-11-24 21:38:00</div></div>
</div>
<div class="row alt" style="top:69px">
<div class="c" style="left:0;width:39px"><div class="cb" style="top:11.500px"></div></div>
<div class="c" style="left:39px;width:150px"><div class="tx">T000259</div></div>
<div class="c" style="left:189px;width:300px"><div class="tx" style="left:10px;right:10px">【导入】支持去读取Excel文件中插入的附件</div></div>
<div class="c" style="left:489px;width:100px"><div class="bar" style="width:39px"><i style="width:35.8%"></i></div><span class="pct">35.8%</span></div>
<div class="c" style="left:589px;width:150px"><div class="st">未开始</div></div>
<div class="c" style="left:739px;width:150px"><div class="av"><svg width="20" height="20" viewBox="0 0 20 20"><use href="#av1"/></svg></div><span class="nm">郭闫</span></div>
<div class="c" style="left:889px;width:150px"><div class="tx" style="text-overflow:clip">2023-11-13 21:38:00</div></div>
</div>
<div class="row" style="top:103px">
<div class="c" style="left:0;width:39px"><div class="cb" style="top:11.500px"></div></div>
<div class="c" style="left:39px;width:150px"><div class="tx">T000258</div></div>
<div class="c" style="left:189px;width:300px"><div class="tx" style="left:10px;right:10px">【问卷调查】移动端访问级联字段设置的选项显示不全</div></div>
<div class="c" style="left:489px;width:100px"><div class="bar" style="width:39px"><i style="width:77.6%"></i></div><span class="pct">77.6%</span></div>
<div class="c" style="left:589px;width:150px"><div class="st">未开始</div></div>
<div class="c" style="left:739px;width:150px"><div class="av"><svg width="20" height="20" viewBox="0 0 20 20"><use href="#av2"/></svg></div><span class="nm">曾烨森</span></div>
<div class="c" style="left:889px;width:150px"><div class="tx" style="text-overflow:clip">2023-11-21 21:38:00</div></div>
</div>
<div class="row alt" style="top:137px">
<div class="c" style="left:0;width:39px"><div class="cb" style="top:11.500px"></div></div>
<div class="c" style="left:39px;width:150px"><div class="tx">T000257</div></div>
<div class="c" style="left:189px;width:300px"><div class="tx" style="left:10px;right:10px">【查找汇总】左侧设置日期字段的月份等条件时无法匹配</div></div>
<div class="c" style="left:489px;width:100px"><div class="bar" style="width:39px"><i style="width:54.9%"></i></div><span class="pct">54.9%</span></div>
<div class="c" style="left:589px;width:150px"><div class="st">未开始</div></div>
<div class="c" style="left:739px;width:150px"><div class="av"><svg width="20" height="20" viewBox="0 0 20 20"><use href="#av3"/></svg></div><span class="nm">赖泽城</span></div>
<div class="c" style="left:889px;width:150px"><div class="tx" style="text-overflow:clip">2023-11-11 21:38:00</div></div>
</div>
<div class="row" style="top:171px">
<div class="c" style="left:0;width:39px"><div class="cb" style="top:11.500px"></div></div>
<div class="c" style="left:39px;width:150px"><div class="tx">T000256</div></div>
<div class="c" style="left:189px;width:300px"><div class="tx" style="left:10px;right:10px">【卡片视图】卡片视图上下文中没有formRecord对象</div></div>
<div class="c" style="left:489px;width:100px"><div class="bar" style="width:39px"><i style="width:68.5%"></i></div><span class="pct">68.5%</span></div>
<div class="c" style="left:589px;width:150px"><div class="st">未开始</div></div>
<div class="c" style="left:739px;width:150px"><div class="av"><svg width="20" height="20" viewBox="0 0 20 20"><use href="#av4"/></svg></div><span class="nm">李健</span></div>
<div class="c" style="left:889px;width:150px"><div class="tx" style="text-overflow:clip">2023-11-04 21:38:00</div></div>
</div>
<div class="row alt" style="top:205px">
<div class="c" style="left:0;width:39px"><div class="cb" style="top:11.500px"></div></div>
<div class="c" style="left:39px;width:150px"><div class="tx">T000255</div></div>
<div class="c" style="left:189px;width:300px"><div class="tx" style="left:10px;right:10px">【文档】补充信创文档</div></div>
<div class="c" style="left:489px;width:100px"><div class="bar" style="width:39px"><i style="width:68.1%"></i></div><span class="pct">68.1%</span></div>
<div class="c" style="left:589px;width:150px"><div class="st">未开始</div></div>
<div class="c" style="left:739px;width:150px"><div class="av"><svg width="20" height="20" viewBox="0 0 20 20"><use href="#av5"/></svg></div><span class="nm">王延峰</span></div>
<div class="c" style="left:889px;width:150px"><div class="tx" style="text-overflow:clip">2023-11-12 21:38:00</div></div>
</div>
<div class="row" style="top:239px">
<div class="c" style="left:0;width:39px"><div class="cb" style="top:11.500px"></div></div>
<div class="c" style="left:39px;width:150px"><div class="tx">T000254</div></div>
<div class="c" style="left:189px;width:300px"><div class="tx" style="left:10px;right:10px">【1.0-字段】部分函数方法描述准确，需要修改</div></div>
<div class="c" style="left:489px;width:100px"><div class="bar" style="width:39px"><i style="width:19.3%"></i></div><span class="pct">19.3%</span></div>
<div class="c" style="left:589px;width:150px"><div class="st">未开始</div></div>
<div class="c" style="left:739px;width:150px"><div class="av"><svg width="20" height="20" viewBox="0 0 20 20"><use href="#av0"/></svg></div><span class="nm">杜展扬</span></div>
<div class="c" style="left:889px;width:150px"><div class="tx" style="text-overflow:clip">2023-11-01 21:38:00</div></div>
</div>
<div class="row alt" style="top:273px">
<div class="c" style="left:0;width:39px"><div class="cb" style="top:11.500px"></div></div>
<div class="c" style="left:39px;width:150px"><div class="tx">T000253</div></div>
<div class="c" style="left:189px;width:300px"><div class="tx" style="left:10px;right:10px">【消息队列】支持消息队列的自定义事务</div></div>
<div class="c" style="left:489px;width:100px"><div class="bar" style="width:39px"><i style="width:54.3%"></i></div><span class="pct">54.3%</span></div>
<div class="c" style="left:589px;width:150px"><div class="st">未开始</div></div>
<div class="c" style="left:739px;width:150px"><div class="av"><svg width="20" height="20" viewBox="0 0 20 20"><use href="#av1"/></svg></div><span class="nm">郭闫</span></div>
<div class="c" style="left:889px;width:150px"><div class="tx" style="text-overflow:clip">2023-11-04 21:38:00</div></div>
</div>
<div class="row" style="top:307px">
<div class="c" style="left:0;width:39px"><div class="cb" style="top:11.500px"></div></div>
<div class="c" style="left:39px;width:150px"><div class="tx">T000252</div></div>
<div class="c" style="left:189px;width:300px"><div class="tx" style="left:10px;right:10px">【监听器】数据表更新监听触发监听器，返回值异常</div></div>
<div class="c" style="left:489px;width:100px"><div class="bar" style="width:39px"><i style="width:32.1%"></i></div><span class="pct">32.1%</span></div>
<div class="c" style="left:589px;width:150px"><div class="st">未开始</div></div>
<div class="c" style="left:739px;width:150px"><div class="av"><svg width="20" height="20" viewBox="0 0 20 20"><use href="#av2"/></svg></div><span class="nm">曾烨森</span></div>
<div class="c" style="left:889px;width:150px"><div class="tx" style="text-overflow:clip">2023-11-13 21:38:00</div></div>
</div>
<div class="row alt" style="top:341px">
<div class="c" style="left:0;width:39px"><div class="cb" style="top:11.500px"></div></div>
<div class="c" style="left:39px;width:150px"><div class="tx">T000251</div></div>
<div class="c" style="left:189px;width:300px"><div class="tx" style="left:10px;right:10px">【脚本】单点登录跳转链接需要支持query参数</div></div>
<div class="c" style="left:489px;width:100px"><div class="bar" style="width:39px"><i style="width:31.4%"></i></div><span class="pct">31.4%</span></div>
<div class="c" style="left:589px;width:150px"><div class="st">未开始</div></div>
<div class="c" style="left:739px;width:150px"><div class="av"><svg width="20" height="20" viewBox="0 0 20 20"><use href="#av3"/></svg></div><span class="nm">赖泽城</span></div>
<div class="c" style="left:889px;width:150px"><div class="tx" style="text-overflow:clip">2023-11-18 21:38:00</div></div>
</div>
<div class="row" style="top:375px">
<div class="c" style="left:0;width:39px"><div class="cb" style="top:11.500px"></div></div>
<div class="c" style="left:39px;width:150px"><div class="tx">T000250</div></div>
<div class="c" style="left:189px;width:300px"><div class="tx" style="left:10px;right:10px">【数据表】数据源设置从脚本获取时，报错内容不明确</div></div>
<div class="c" style="left:489px;width:100px"><div class="bar" style="width:45.7px"><i style="width:5.6%"></i></div><span class="pct">5.6%</span></div>
<div class="c" style="left:589px;width:150px"><div class="st">未开始</div></div>
<div class="c" style="left:739px;width:150px"><div class="av"><svg width="20" height="20" viewBox="0 0 20 20"><use href="#av4"/></svg></div><span class="nm">李健</span></div>
<div class="c" style="left:889px;width:150px"><div class="tx" style="text-overflow:clip">2023-11-25 21:38:00</div></div>
</div>
<div class="row alt" style="top:409px">
<div class="c" style="left:0;width:39px"><div class="cb" style="top:11.500px"></div></div>
<div class="c" style="left:39px;width:150px"><div class="tx">T000249</div></div>
<div class="c" style="left:189px;width:300px"><div class="tx" style="left:10px;right:10px">【通知】通知列表已读和未读视觉上的区分不明显</div></div>
<div class="c" style="left:489px;width:100px"><div class="bar" style="width:39px"><i style="width:79.2%"></i></div><span class="pct">79.2%</span></div>
<div class="c" style="left:589px;width:150px"><div class="st">未开始</div></div>
<div class="c" style="left:739px;width:150px"><div class="av"><svg width="20" height="20" viewBox="0 0 20 20"><use href="#av5"/></svg></div><span class="nm">王延峰</span></div>
<div class="c" style="left:889px;width:150px"><div class="tx" style="text-overflow:clip">2023-11-20 21:38:00</div></div>
</div>
<div class="row" style="top:443px">
<div class="c" style="left:0;width:39px"><div class="cb" style="top:11.500px"></div></div>
<div class="c" style="left:39px;width:150px"><div class="tx">T000248</div></div>
<div class="c" style="left:189px;width:300px"><div class="tx" style="left:10px;right:10px">【数据表】列表类型字段设置复选框和单选框时显示异常</div></div>
<div class="c" style="left:489px;width:100px"><div class="bar" style="width:39px"><i style="width:65.9%"></i></div><span class="pct">65.9%</span></div>
<div class="c" style="left:589px;width:150px"><div class="st">未开始</div></div>
<div class="c" style="left:739px;width:150px"><div class="av"><svg width="20" height="20" viewBox="0 0 20 20"><use href="#av0"/></svg></div><span class="nm">杜展扬</span></div>
<div class="c" style="left:889px;width:150px"><div class="tx" style="text-overflow:clip">2023-11-21 21:38:00</div></div>
</div>
<div class="row alt" style="top:477px">
<div class="c" style="left:0;width:39px"><div class="cb" style="top:11.500px"></div></div>
<div class="c" style="left:39px;width:150px"><div class="tx">T000247</div></div>
<div class="c" style="left:189px;width:300px"><div class="tx" style="left:10px;right:10px">【数据表】列表类型字段中有评分字段时，创建记录报错</div></div>
<div class="c" style="left:489px;width:100px"><div class="bar" style="width:39px"><i style="width:59.4%"></i></div><span class="pct">59.4%</span></div>
<div class="c" style="left:589px;width:150px"><div class="st">未开始</div></div>
<div class="c" style="left:739px;width:150px"><div class="av"><svg width="20" height="20" viewBox="0 0 20 20"><use href="#av1"/></svg></div><span class="nm">郭闫</span></div>
<div class="c" style="left:889px;width:150px"><div class="tx" style="text-overflow:clip">2023-11-25 21:38:00</div></div>
</div>
<div class="row" style="top:511px">
<div class="c" style="left:0;width:39px"><div class="cb" style="top:11.500px"></div></div>
<div class="c" style="left:39px;width:150px"><div class="tx">T000246</div></div>
<div class="c" style="left:189px;width:300px"><div class="tx" style="left:10px;right:10px">【消息队列】消息推送调用自动化创建数据，数据重复</div></div>
<div class="c" style="left:489px;width:100px"><div class="bar" style="width:39px"><i style="width:98.6%"></i></div><span class="pct">98.6%</span></div>
<div class="c" style="left:589px;width:150px"><div class="st">未开始</div></div>
<div class="c" style="left:739px;width:150px"><div class="av"><svg width="20" height="20" viewBox="0 0 20 20"><use href="#av2"/></svg></div><span class="nm">曾烨森</span></div>
<div class="c" style="left:889px;width:150px"><div class="tx" style="text-overflow:clip">2023-11-14 21:38:00</div></div>
</div>
<div class="row alt" style="top:545px;background:#f6f6f7;border-bottom:none">
<div class="c" style="left:0px;width:39px"></div>
<div class="c" style="left:39px;width:150px"></div>
<div class="c" style="left:189px;width:300px"></div>
<div class="c" style="left:489px;width:100px"></div>
<div class="c" style="left:589px;width:150px"></div>
<div class="c" style="left:739px;width:150px"></div>
<div class="c" style="left:889px;width:150px"></div>
</div>
<div id="fix">
<div class="row hd" style="top:0;width:130px"><div class="c" style="left:0;width:130px"><svg class="abs" style="left:10.500px;top:11px" width="11" height="11" viewBox="0 0 11 11" fill="none" stroke="#8d9096" stroke-width=".9"><circle cx="5.500" cy="5.500" r="4.700"/><path d="M5.500 2.800v3h2.400"/></svg><span class="abs" style="left:25px;top:0">创建时间</span><div class="caret" style="left:106.500px"></div></div></div>
<div class="row" style="top:35px;width:130px"><div class="c" style="left:0;width:130px"><div class="tx" style="left:10px;right:1px;text-overflow:clip">2023-11-27 21:36:13</div></div></div>
<div class="row alt" style="top:69px;width:130px"><div class="c" style="left:0;width:130px"><div class="tx" style="left:10px;right:1px;text-overflow:clip">2023-11-27 21:36:13</div></div></div>
<div class="row" style="top:103px;width:130px"><div class="c" style="left:0;width:130px"><div class="tx" style="left:10px;right:1px;text-overflow:clip">2023-11-27 21:36:13</div></div></div>
<div class="row alt" style="top:137px;width:130px"><div class="c" style="left:0;width:130px"><div class="tx" style="left:10px;right:1px;text-overflow:clip">2023-11-27 21:36:13</div></div></div>
<div class="row" style="top:171px;width:130px"><div class="c" style="left:0;width:130px"><div class="tx" style="left:10px;right:1px;text-overflow:clip">2023-11-27 21:36:13</div></div></div>
<div class="row alt" style="top:205px;width:130px"><div class="c" style="left:0;width:130px"><div class="tx" style="left:10px;right:1px;text-overflow:clip">2023-11-27 21:36:13</div></div></div>
<div class="row" style="top:239px;width:130px"><div class="c" style="left:0;width:130px"><div class="tx" style="left:10px;right:1px;text-overflow:clip">2023-11-27 21:36:12</div></div></div>
<div class="row alt" style="top:273px;width:130px"><div class="c" style="left:0;width:130px"><div class="tx" style="left:10px;right:1px;text-overflow:clip">2023-11-27 21:36:12</div></div></div>
<div class="row" style="top:307px;width:130px"><div class="c" style="left:0;width:130px"><div class="tx" style="left:10px;right:1px;text-overflow:clip">2023-11-27 21:36:12</div></div></div>
<div class="row alt" style="top:341px;width:130px"><div class="c" style="left:0;width:130px"><div class="tx" style="left:10px;right:1px;text-overflow:clip">2023-11-27 21:36:12</div></div></div>
<div class="row" style="top:375px;width:130px"><div class="c" style="left:0;width:130px"><div class="tx" style="left:10px;right:1px;text-overflow:clip">2023-11-27 21:36:12</div></div></div>
<div class="row alt" style="top:409px;width:130px"><div class="c" style="left:0;width:130px"><div class="tx" style="left:10px;right:1px;text-overflow:clip">2023-11-27 21:36:12</div></div></div>
<div class="row" style="top:443px;width:130px"><div class="c" style="left:0;width:130px"><div class="tx" style="left:10px;right:1px;text-overflow:clip">2023-11-27 21:36:12</div></div></div>
<div class="row alt" style="top:477px;width:130px"><div class="c" style="left:0;width:130px"><div class="tx" style="left:10px;right:1px;text-overflow:clip">2023-11-27 21:36:12</div></div></div>
<div class="row" style="top:511px;width:130px"><div class="c" style="left:0;width:130px"><div class="tx" style="left:10px;right:1px;text-overflow:clip">2023-11-27 21:36:12</div></div></div>
<div class="row alt" style="top:545px;width:130px;background:#f6f6f7;border-bottom:none"><div class="c" style="left:0;width:130px"></div></div>
</div>
<div class="abs" style="left:1125px;top:0;width:12px;height:35px;background:#f8f8f9;border-bottom:1px solid #e8e9eb"></div>
<div class="abs" style="left:1125px;top:35px;width:12px;height:544px;background:#fff"></div>
<div class="abs" style="left:1132px;top:0;width:1px;height:579px;background:#ebecee"></div>
<div class="abs" style="left:1125.300px;top:35px;width:6.700px;height:152px;border-radius:3.500px;background:#b3b3b3"></div>
<div class="abs" style="left:0;top:578.500px;width:1136px;height:14px;background:#fff;border-top:1px solid #e8e9eb"></div>
<div class="abs" style="left:0;top:580px;width:607px;height:11px;border-radius:5.500px;background:#cfcfcf"></div>
</div>
<div class="abs" style="left:1105px;top:793.700px;width:30px;height:30px;border-radius:15px;background:#e2685a;box-shadow:0 2px 8px rgba(0,0,0,.18)"><svg class="abs" style="left:7px;top:7px" width="16" height="16" viewBox="0 0 16 16"><circle cx="8" cy="8" r="6.800" fill="none" stroke="#fff" stroke-width="1.600"/><text x="8" y="11.800" font-size="10.500" font-weight="bold" font-family="'Liberation Sans',sans-serif" fill="#fff" text-anchor="middle">?</text></svg></div>
</div>
</body>
</html>
